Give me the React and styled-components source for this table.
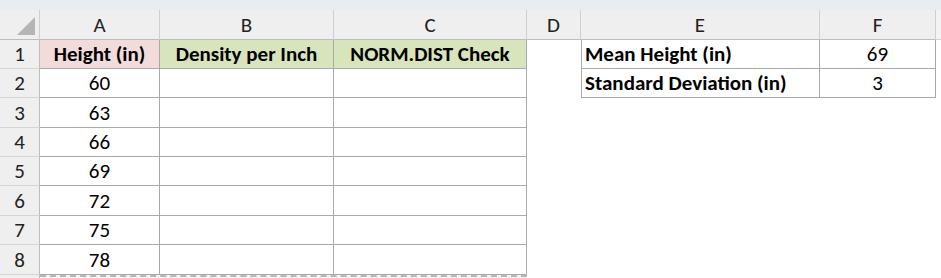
import React from 'react';
import styled, { createGlobalStyle } from 'styled-components';

const GlobalStyle = createGlobalStyle`
  html, body {
    margin: 0;
    padding: 0;
    background: #ffffff;
  }
  body {
    font-family: Carlito, Lato, "Liberation Sans", sans-serif;
  }
`;

const COLS = [
  { key: 'A', width: 120 },
  { key: 'B', width: 174 },
  { key: 'C', width: 193 },
  { key: 'D', width: 54 },
  { key: 'E', width: 239 },
  { key: 'F', width: 116 },
];

const ROW_HEIGHTS = [29, 29, 30, 29, 29, 30, 29, 30];

const Sheet = styled.div`
  display: flex;
  flex-direction: column;
  width: 941px;
  height: 278px;
  overflow: hidden;
  background: #ffffff;
`;

const TopStrip = styled.div`
  height: 10px;
  background: #e8edf1;
  flex: none;
`;

const Grid = styled.div`
  display: grid;
  grid-template-columns: 40px ${COLS.map(c => c.width + 'px').join(' ')} 1fr;
  grid-template-rows: 30px ${ROW_HEIGHTS.map(h => h + 'px').join(' ')} 1fr;
  flex: 1;
`;

const Corner = styled.div`
  position: relative;
  background: #efefef;
  border-right: 1px solid #cfcfcf;
  border-bottom: 1px solid #bdbdbd;
  box-sizing: border-box;
  &::after {
    content: '';
    position: absolute;
    right: 4px;
    bottom: 4px;
    width: 0;
    height: 0;
    border-left: 18px solid transparent;
    border-bottom: 18px solid #b5b5b5;
  }
`;

const ColHead = styled.div`
  display: flex;
  align-items: center;
  justify-content: center;
  background: #efefef;
  border-right: 1px solid #cfcfcf;
  border-bottom: 1px solid #bdbdbd;
  box-sizing: border-box;
  font-size: 21px;
  color: #222;
`;

const RowHead = styled.div`
  display: flex;
  align-items: center;
  justify-content: center;
  background: #efefef;
  border-right: 1px solid #bdbdbd;
  border-bottom: 1px solid #d4d4d4;
  box-sizing: border-box;
  font-size: 21px;
  color: #222;
`;

const Cell = styled.div`
  display: flex;
  align-items: center;
  justify-content: ${p => (p.$left ? 'flex-start' : 'center')};
  padding-left: ${p => (p.$left ? '3px' : '0')};
  box-sizing: border-box;
  background: ${p => p.$fill || '#ffffff'};
  font-size: 21px;
  font-weight: ${p => (p.$bold ? 700 : 400)};
  color: #000;
  white-space: nowrap;
  overflow: hidden;
  border-right: ${p => (p.$boxed ? '1px solid #a9a9a9' : '1px solid transparent')};
  border-bottom: ${p => (p.$boxed ? '1px solid #a9a9a9' : '1px solid transparent')};
  border-left: ${p => (p.$edge ? '1px solid #a9a9a9' : '0')};
`;

const Tail = styled.div`
  background: #f3f3f3;
  border-bottom: 1px solid #d4d4d4;
`;

const Spill = styled.div`
  border-top: 2px dashed #b8b8b8;
  background: #f4f4f4;
  grid-column: ${p => p.$span};
`;

const RowFoot = styled.div`
  background: #efefef;
  border-right: 1px solid #bdbdbd;
`;

const heights = [60, 63, 66, 69, 72, 75, 78];

const rows = [
  {
    A: { text: 'Height (in)', bold: true, fill: '#f2dcdb' },
    B: { text: 'Density per Inch', bold: true, fill: '#d8e4bc' },
    C: { text: 'NORM.DIST Check', bold: true, fill: '#d8e4bc' },
    E: { text: 'Mean Height (in)', bold: true, left: true },
    F: { text: '69' },
  },
  ...heights.map((h, i) => ({
    A: { text: String(h) },
    B: { text: '' },
    C: { text: '' },
    ...(i === 0
      ? { E: { text: 'Standard Deviation (in)', bold: true, left: true }, F: { text: '3' } }
      : {}),
  })),
];

export default function App() {
  return (
    <>
      <GlobalStyle />
      <Sheet>
        <TopStrip />
        <Grid>
          <Corner />
          {COLS.map(c => (
            <ColHead key={c.key}>{c.key}</ColHead>
          ))}
          <Tail />
          {rows.map((row, r) => (
            <React.Fragment key={r}>
              <RowHead>{r + 1}</RowHead>
              {COLS.map(c => {
                const cell = row[c.key];
                if (!cell) return <Cell key={c.key} />;
                return (
                  <Cell
                    key={c.key}
                    $boxed
                    $edge={c.key === 'E'}
                    $bold={cell.bold}
                    $fill={cell.fill}
                    $left={cell.left}
                  >
                    {cell.text}
                  </Cell>
                );
              })}
              <Cell />
            </React.Fragment>
          ))}
          <RowFoot />
          <Spill $span="2 / 5" />
          <Cell />
        </Grid>
      </Sheet>
    </>
  );
}
